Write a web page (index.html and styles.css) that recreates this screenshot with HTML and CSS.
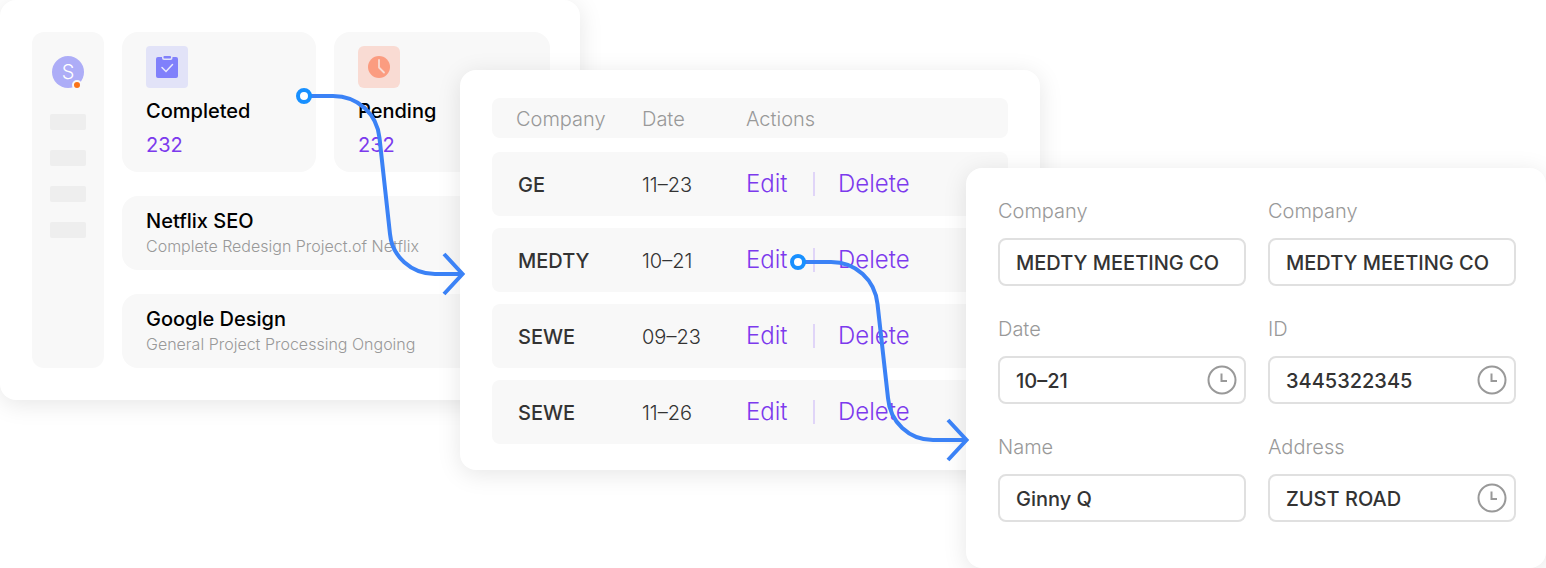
FILE: index.html
```html
<!DOCTYPE html>
<html lang="en">
<head>
<meta charset="utf-8">
<meta name="viewport" content="width=device-width, initial-scale=1">
<title>Project workflow</title>
<link rel="stylesheet" href="styles.css">
</head>
<body>
<main class="scene">
  <section class="panel dashboard">
    <aside class="sidebar">
      <div class="avatar">S<span class="status"></span></div>
      <span class="nav-bar"></span>
      <span class="nav-bar"></span>
      <span class="nav-bar"></span>
      <span class="nav-bar"></span>
    </aside>
    <div class="overview">
      <div class="stats">
        <article class="stat">
          <svg class="stat-icon" viewBox="0 0 42 42" aria-hidden="true">
            <rect width="42" height="42" rx="4" fill="#e2e3f8"/>
            <path d="M12 11h18a2 2 0 0 1 2 2v17a2 2 0 0 1-2 2H12a2 2 0 0 1-2-2V13a2 2 0 0 1 2-2z" fill="#8080fb"/>
            <path d="M16 9v3a2 2 0 0 0 2 2h6.500a2 2 0 0 0 2-2V9z" fill="#e2e3f8"/>
            <rect x="17.500" y="10" width="7.500" height="2.500" rx=".8" fill="#8080fb"/>
            <path d="M16 21.500l4 4 6.500-7" fill="none" stroke="#e9e9fc" stroke-width="1.500" stroke-linecap="round"/>
          </svg>
          <h2 class="title">Completed</h2>
          <p class="count">232</p>
        </article>
        <article class="stat">
          <svg class="stat-icon" viewBox="0 0 42 42" aria-hidden="true">
            <rect width="42" height="42" rx="6" fill="#f9dbd3"/>
            <circle cx="21" cy="21" r="11" fill="#fb9c80"/>
            <path d="M21 14v7.500l5 5" fill="none" stroke="#f9dbd3" stroke-width="1.800" stroke-linecap="round" stroke-linejoin="round"/>
          </svg>
          <h2 class="title">Pending</h2>
          <p class="count">232</p>
        </article>
      </div>
      <article class="project">
        <h2 class="title">Netflix SEO</h2>
        <p class="summary">Complete Redesign Project.of Netflix</p>
      </article>
      <article class="project">
        <h2 class="title">Google Design</h2>
        <p class="summary">General Project Processing Ongoing</p>
      </article>
    </div>
  </section>

  <section class="panel records">
    <table class="table">
      <thead><tr><th>Company</th><th>Date</th><th>Actions</th></tr></thead>
      <tbody>
        <tr><td class="name">GE</td><td>11–23</td><td class="actions"><button type="button">Edit</button><span class="divider"></span><button type="button">Delete</button></td></tr>
        <tr><td class="name">MEDTY</td><td>10–21</td><td class="actions"><button type="button">Edit</button><span class="divider"></span><button type="button">Delete</button></td></tr>
        <tr><td class="name">SEWE</td><td>09–23</td><td class="actions"><button type="button">Edit</button><span class="divider"></span><button type="button">Delete</button></td></tr>
        <tr><td class="name">SEWE</td><td>11–26</td><td class="actions"><button type="button">Edit</button><span class="divider"></span><button type="button">Delete</button></td></tr>
      </tbody>
    </table>
  </section>

  <form class="panel details">
    <div class="field">
      <label for="company">Company</label>
      <div class="control"><input id="company" type="text" value="MEDTY MEETING CO"></div>
    </div>
    <div class="field">
      <label for="company-2">Company</label>
      <div class="control"><input id="company-2" type="text" value="MEDTY MEETING CO"></div>
    </div>
    <div class="field">
      <label for="date">Date</label>
      <div class="control"><input id="date" type="text" value="10–21">
        <svg class="clock" viewBox="0 0 30 30" aria-hidden="true"><circle cx="15" cy="15" r="13.500"/><path d="M14.500 8.500V16H20"/></svg></div>
    </div>
    <div class="field">
      <label for="id">ID</label>
      <div class="control"><input id="id" type="text" value="3445322345">
        <svg class="clock" viewBox="0 0 30 30" aria-hidden="true"><circle cx="15" cy="15" r="13.500"/><path d="M14.500 8.500V16H20"/></svg></div>
    </div>
    <div class="field">
      <label for="name">Name</label>
      <div class="control"><input id="name" type="text" value="Ginny Q"></div>
    </div>
    <div class="field">
      <label for="address">Address</label>
      <div class="control"><input id="address" type="text" value="ZUST ROAD">
        <svg class="clock" viewBox="0 0 30 30" aria-hidden="true"><circle cx="15" cy="15" r="13.500"/><path d="M14.500 8.500V16H20"/></svg></div>
    </div>
  </form>

  <svg class="connectors" viewBox="0 0 1546 568" aria-hidden="true">
    <g class="wire">
      <path d="M304 96H333C358 96 377 114 379.500 138L390 234C392 256 411 274 435 274H463"/>
      <path d="M444 254L462.500 274L444 294"/>
      <path d="M798 262H831C856 262 875 280 877.500 304L888 398C890 422 909 440 933 440H967"/>
      <path d="M948 420L966.500 440L948 460"/>
    </g>
    <g class="node">
      <circle cx="304" cy="96" r="6"/>
      <circle cx="798" cy="262" r="6"/>
    </g>
  </svg>
</main>
</body>
</html>
```
FILE: styles.css
```css
* { box-sizing: border-box; }

body {
  margin: 0;
  background: #fff;
  color: #333;
  font-family: Inter, "Liberation Sans", sans-serif;
  font-size: 20px;
  line-height: 24px;
}

h2, p { margin: 0; }

/* Columns and rows mark the edges of the three overlapping panels. */
.scene {
  position: relative;
  display: grid;
  grid-template-columns: 460fr 120fr 386fr 74fr 506fr;
  grid-template-rows: 70px 98px 232px 70px auto;
  overflow: hidden;
}

.panel {
  min-width: 0;
  background: #fff;
  border-radius: 16px;
  box-shadow: 0 4px 24px rgba(0, 0, 0, 0.1);
}

.dashboard {
  grid-area: 1 / 1 / 4 / 3;
  display: flex;
  gap: 18px;
  padding: 32px 30px 32px 32px;
}

.sidebar {
  flex: 0 0 72px;
  display: flex;
  flex-direction: column;
  align-items: center;
  gap: 20px;
  padding-top: 24px;
  background: #f8f8f8;
  border-radius: 12px;
}

.avatar {
  position: relative;
  width: 32px;
  height: 32px;
  margin-bottom: 6px;
  border-radius: 50%;
  background: #adadf7;
  color: #fff;
  font-weight: 300;
  line-height: 32px;
  text-align: center;
}

.status {
  position: absolute;
  right: 2px;
  bottom: -2px;
  width: 10px;
  height: 10px;
  border: 2px solid #f8f8f8;
  border-radius: 50%;
  background: #fa7317;
}

.nav-bar {
  width: 36px;
  height: 16px;
  border-radius: 2px;
  background: #eee;
}

.overview {
  flex: 1;
  display: flex;
  flex-direction: column;
  gap: 24px;
  min-width: 0;
}

.stats {
  display: grid;
  grid-template-columns: 194fr 216fr;
  gap: 18px;
}

.stat {
  padding: 14px 24px;
  background: #f8f8f8;
  border-radius: 16px;
}

.stat-icon {
  display: block;
  width: 42px;
  height: 42px;
  margin-bottom: 11px;
}

.title {
  color: #000;
  font-size: 20px;
  font-weight: 450;
}

.count {
  margin-top: 10px;
  color: #7c3aed;
}

.stat .count { margin-bottom: 1px; }

.project {
  padding: 13px 24px 10px;
  background: #f8f8f8;
  border-radius: 16px;
}

.summary {
  color: #999;
  font-size: 16px;
  font-weight: 350;
  line-height: 27px;
}

.records {
  grid-area: 2 / 2 / 5 / 5;
  padding: 28px 32px 26px;
}

.table {
  display: grid;
  gap: 14px;
}

.table tbody {
  display: grid;
  gap: 12px;
}

.table tr {
  display: grid;
  grid-template-columns: 126px 104px 1fr;
  align-items: center;
  height: 64px;
  padding: 0 24px;
  background: #f8f8f8;
  border-radius: 8px;
}

.table thead tr { height: 40px; }

.table th {
  padding: 2px 0 0;
  color: #999;
  font-weight: 300;
  text-align: left;
}

.table td {
  padding: 2px 0 0;
  font-weight: 350;
}

.table .name {
  padding-left: 2px;
  font-weight: 500;
}

.table .actions {
  display: flex;
  align-items: center;
  gap: 23px;
  padding: 0;
}

.actions button {
  min-width: 44px;
  padding: 0;
  border: 0;
  background: none;
  color: #7c3aed;
  font: inherit;
  font-size: 24px;
  text-align: left;
}

.divider {
  width: 2px;
  height: 24px;
  background: #e0d5f8;
}

.details {
  grid-area: 3 / 4 / 6 / 6;
  display: grid;
  grid-template-columns: 1fr 1fr;
  gap: 32px 22px;
  padding: 32px 30px 46px 32px;
}

.records { grid-column: 2 / 5; }
.details { grid-column: 4 / 6; }

.field {
  display: flex;
  flex-direction: column;
  gap: 16px;
  min-width: 0;
}

.field label {
  color: #999;
  font-weight: 300;
  line-height: 22px;
}

.control {
  display: flex;
  align-items: center;
  height: 48px;
  padding: 0 7px 0 16px;
  border: 2px solid #e0e0e0;
  border-radius: 8px;
}

.control input {
  flex: 1;
  min-width: 0;
  padding: 2px 0 0;
  border: 0;
  outline: 0;
  background: none;
  color: #333;
  font: inherit;
  font-weight: 450;
}

.clock {
  flex: none;
  width: 30px;
  height: 30px;
  fill: none;
  stroke: #999;
  stroke-width: 2;
}

.connectors {
  position: absolute;
  top: 0;
  left: 0;
  width: 100%;
  pointer-events: none;
}

.wire {
  fill: none;
  stroke: #3b82f6;
  stroke-width: 4;
}

.node {
  fill: #fff;
  stroke: #1890ff;
  stroke-width: 4;
}
```
